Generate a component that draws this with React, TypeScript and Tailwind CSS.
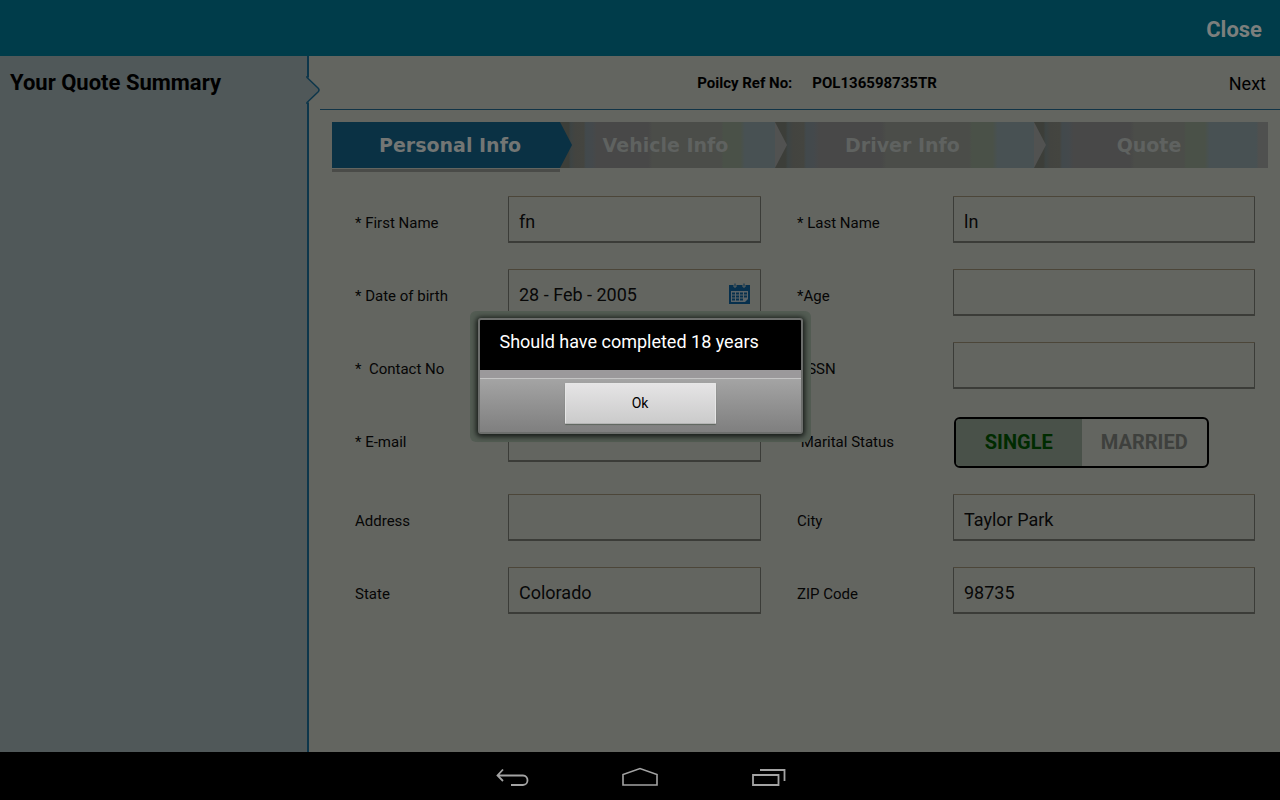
import { useState, type ReactNode } from "react";

const fieldClass =
  "h-[47px] w-full min-w-0 rounded-[1px] border border-[#3b3c38] border-t-[#4c4639] border-b-2 bg-transparent px-2.5 pt-1 text-lg text-[#080808] outline-none";

const labelClass = "flex h-[47px] items-center whitespace-pre pt-2 text-[15px] text-[#060606]";

function FieldLabel({ id, children }: { id: string; children: ReactNode }) {
  return (
    <label htmlFor={id} className={labelClass}>
      {children}
    </label>
  );
}

function TextField({ id, value = "" }: { id: string; value?: string }) {
  return <input id={id} type="text" defaultValue={value} className={fieldClass} />;
}

const pendingFill =
  "bg-[linear-gradient(90deg,#3c3e39_0%,#3c3e39_4%,#3d4444_5%,#434440_7%,#444540_11%,#42494c_12%,#44494c_15%,#484848_17%,#484848_41%,#4b4d49_43%,#4b4d49_75%,#4a5148_76%,#4a5148_84%,#485153_86%,#485153_100%)]";

const lastFill =
  "bg-[linear-gradient(90deg,#3c3e39_0%,#3c3e39_4%,#3d4444_5%,#434440_7%,#444540_11%,#42494c_12%,#44494c_15%,#484848_17%,#484848_41%,#4b4d49_43%,#4b4d49_64%,#4a5148_65%,#4a5148_73%,#485153_75%,#485153_95%,#4f504f_96%,#4f504f_100%)]";

const steps = [
  { name: "Personal Info", width: "grow-228", fill: "bg-[#0a3144]", text: "text-[#737674]", tip: "#0a3144" },
  { name: "Vehicle Info", width: "grow-215", fill: pendingFill, text: "text-[#5f6260]", tip: "#515251" },
  { name: "Driver Info", width: "grow-259", fill: pendingFill, text: "text-[#5f6260]", tip: "#515251" },
  { name: "Quote", width: "grow-234", fill: lastFill, text: "text-[#5f6260]", tip: "" },
];

function Steps() {
  return (
    <nav aria-label="Quote steps" className="mt-3 mr-3 ml-[23px]">
      <ol className="flex">
        {steps.map((step, i) => (
          <li key={step.name} className={`relative basis-0 ${step.width}`}>
            <button
              className={`h-[46px] w-full font-['DejaVu_Sans',sans-serif] text-[19px] font-bold whitespace-nowrap ${step.fill} ${step.text} ${i === 0 ? "pl-2" : "pr-1"}`}
            >
              {step.name}
            </button>
            {step.tip && (
              <svg
                className="absolute top-0 left-full z-10 h-[46px] w-3"
                viewBox="0 0 12 46"
                preserveAspectRatio="none"
                aria-hidden="true"
              >
                <path d="M0 0 L12 23 L0 46Z" fill={step.tip} />
              </svg>
            )}
            <div className={`mt-px h-[3px] ${i === 0 ? "bg-[#4a4b48]" : ""}`} />
          </li>
        ))}
      </ol>
    </nav>
  );
}

function CalendarIcon() {
  return (
    <svg className="h-[21px] w-[21px]" viewBox="0 0 21 21" aria-hidden="true">
      <path d="M0 2h21v19H0z" fill="#07304d" />
      <path d="M5 0h2v4H5zM14 0h2v4h-2z" fill="#07304d" stroke="#636560" strokeWidth="1" />
      <path d="M2 8h17v8l-3 3H2z" fill="#5c6468" />
      <path
        d="M3 9.5h3v2H3zM7 9.5h3v2H7zM11 9.5h3v2h-3zM15 9.5h3v2h-3zM3 12.5h3v2H3zM7 12.5h3v2H7zM11 12.5h3v2h-3zM15 12.5h3v2h-3zM3 15.5h3v2H3zM7 15.5h3v2H7zM11 15.5h3v2h-3z"
        fill="#07304d"
      />
    </svg>
  );
}

function MaritalToggle() {
  const [status, setStatus] = useState("SINGLE");
  return (
    <div className="pt-0.5 pl-px">
      <div
        role="group"
        aria-labelledby="marital-label"
        className="flex h-[51px] w-[255px] overflow-hidden rounded-md border-2 border-black"
      >
        {["SINGLE", "MARRIED"].map((option) => (
          <button
            key={option}
            type="button"
            aria-pressed={status === option}
            onClick={() => setStatus(option)}
            className={`flex-1 pb-0.5 text-xl font-bold ${
              status === option ? "bg-[#495149] text-[#002b00]" : "text-[#3e403d]"
            }`}
          >
            {option}
          </button>
        ))}
      </div>
    </div>
  );
}

function QuoteForm() {
  return (
    <form className="mt-6 mr-[25px] ml-[46px] grid grid-cols-[153px_minmax(0,253fr)_192px_minmax(0,302fr)] gap-y-[26px] [&>*:nth-child(4n+3)]:pl-9">
      <FieldLabel id="first">* First Name</FieldLabel>
      <TextField id="first" value="fn" />
      <FieldLabel id="last">* Last Name</FieldLabel>
      <TextField id="last" value="ln" />

      <FieldLabel id="dob">* Date of birth</FieldLabel>
      <div className="relative">
        <TextField id="dob" value="28 - Feb - 2005" />
        <button type="button" aria-label="Pick a date" className="absolute top-3.5 right-[11px]">
          <CalendarIcon />
        </button>
      </div>
      <FieldLabel id="age">*Age</FieldLabel>
      <TextField id="age" />

      <FieldLabel id="contact">*  Contact No</FieldLabel>
      <TextField id="contact" />
      <FieldLabel id="ssn">* SSN</FieldLabel>
      <TextField id="ssn" />

      <FieldLabel id="email">* E-mail</FieldLabel>
      <TextField id="email" />
      <div id="marital-label" className={labelClass}>
        {" Marital Status"}
      </div>
      <MaritalToggle />

      <FieldLabel id="address">Address</FieldLabel>
      <TextField id="address" />
      <FieldLabel id="city">City</FieldLabel>
      <TextField id="city" value="Taylor Park" />

      <FieldLabel id="state">State</FieldLabel>
      <TextField id="state" value="Colorado" />
      <FieldLabel id="zip">ZIP Code</FieldLabel>
      <TextField id="zip" value="98735" />
    </form>
  );
}

function AgeDialog() {
  return (
    <div className="absolute inset-0 z-20 flex items-center justify-center">
      <div className="rounded-md bg-[#535c53] px-2 pt-[7px] pb-2">
        <div
          role="alertdialog"
          aria-labelledby="dialog-message"
          className="w-[325px] rounded-[3px] border-2 border-[#6c6e6c] bg-black shadow-[0_1px_5px_2px_#1a1e1b]"
        >
          <p id="dialog-message" className="h-[50px] px-5 pt-2 text-lg leading-7 text-white">
            Should have completed 18 years
          </p>
          <div className="h-2 bg-[#9b999b]" />
          <div className="flex h-[54px] justify-center border-t border-[#c4c4c4] bg-linear-to-b from-[#a4a4a4] to-[#7f7f7f] pt-1">
            <button
              type="button"
              className="h-[41px] w-[151px] rounded-[1px] border border-[#e6e6e6] border-b-[#b5b5b5] bg-linear-to-b from-[#e5e4e5] to-[#cbcbcb] text-sm text-black shadow-[0_1px_1px_#5f665f]"
            >
              Ok
            </button>
          </div>
        </div>
      </div>
    </div>
  );
}

function SystemBar() {
  return (
    <nav
      aria-label="System"
      className="flex h-12 items-center justify-center gap-[92px] bg-black text-[#a3a3a3]"
    >
      <button aria-label="Back">
        <svg width="36" height="24" viewBox="0 0 36 24" fill="none" stroke="currentColor" strokeWidth="1.8">
          <path d="M9 5.500 L3.500 11.500 L9 17 M3.500 11.500 H29 C35 11.500 35 21 29 21 H17" />
        </svg>
      </button>
      <button aria-label="Home">
        <svg width="36" height="24" viewBox="0 0 36 24" fill="none" stroke="currentColor" strokeWidth="1.6">
          <path d="M1 21 V10.500 L18 4.500 L35 10.500 V21 Z" />
        </svg>
      </button>
      <button aria-label="Recent apps">
        <svg width="36" height="24" viewBox="0 0 36 24" fill="none" stroke="currentColor" strokeWidth="1.8">
          <path d="M3 11 H28.500 V21 H3 Z M10 6 H34.500 V17" />
        </svg>
      </button>
    </nav>
  );
}

export default function App() {
  return (
    <div className="flex min-h-screen flex-col bg-[#636560] font-[Roboto,sans-serif]">
      <div className="relative flex flex-1 flex-col">
        <header className="flex h-14 items-center justify-end bg-[#003c4a] px-[18px] pt-0.5">
          <button className="text-[22px] font-bold text-[#7c7f7d]">Close</button>
        </header>
        <div className="flex flex-1">
          <aside className="relative w-[309px] shrink-0 border-r-2 border-[#0d364b] bg-[#505859] px-2.5 pt-[11px]">
            <h1 className="text-[22px] leading-8 font-bold text-black">Your Quote Summary</h1>
            <svg
              className="absolute top-5 -right-[13px]"
              width="14"
              height="28"
              viewBox="0 0 14 28"
              aria-hidden="true"
            >
              <path d="M0 1.500 H3 V26.500 H0Z" fill="#505859" />
              <path
                d="M1 0 V1.500 L12 12 Q14 14 12 16 L1 26.500 V28"
                fill="#505859"
                stroke="#0d364b"
                strokeWidth="1.500"
              />
            </svg>
          </aside>
          <main className="min-w-0 flex-1">
            <div className="ml-[11px] grid h-[54px] grid-cols-[1fr_auto_1fr] items-center border-b border-[#123447] pt-0.5 pr-3.5 pl-12 text-[15px]">
              <div className="col-start-2 flex gap-5 font-bold text-black">
                <span>Poilcy Ref No:</span>
                <span>POL136598735TR</span>
              </div>
              <button className="justify-self-end text-lg text-black">Next</button>
            </div>
            <Steps />
            <QuoteForm />
          </main>
        </div>
        <AgeDialog />
      </div>
      <SystemBar />
    </div>
  );
}
